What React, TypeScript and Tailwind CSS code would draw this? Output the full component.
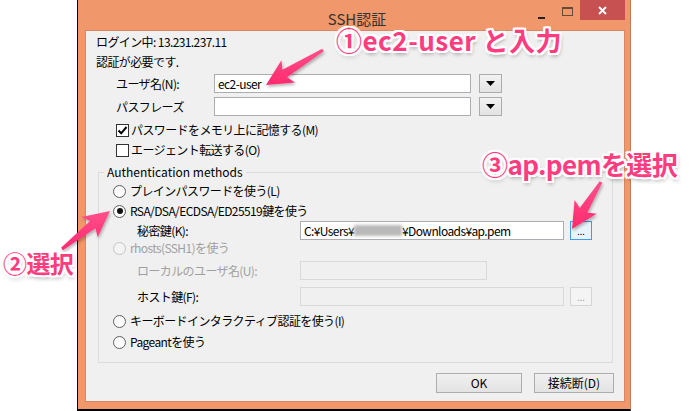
import React from "react";

type Pt = [number, number];

// skitch style arrow: thin tail, wide barbed head
function arrowPoints(tail: Pt, tip: Pt) {
  const tailW = 3;
  const neckW = 9;
  const headW = 26;
  const headL = 22;
  const [x1, y1] = tail;
  const [x2, y2] = tip;
  const len = Math.hypot(x2 - x1, y2 - y1);
  const dx = (x2 - x1) / len;
  const dy = (y2 - y1) / len;
  const nx = -dy;
  const ny = dx;
  const bx = x2 - dx * headL;
  const by = y2 - dy * headL;
  const pts: Pt[] = [
    [x1 + (nx * tailW) / 2, y1 + (ny * tailW) / 2],
    [bx + (nx * neckW) / 2, by + (ny * neckW) / 2],
    [bx - dx * 4 + (nx * headW) / 2, by - dy * 4 + (ny * headW) / 2],
    [x2, y2],
    [bx - dx * 4 - (nx * headW) / 2, by - dy * 4 - (ny * headW) / 2],
    [bx - (nx * neckW) / 2, by - (ny * neckW) / 2],
    [x1 - (nx * tailW) / 2, y1 - (ny * tailW) / 2],
  ];
  return pts.map((p) => `${p[0].toFixed(1)},${p[1].toFixed(1)}`).join(" ");
}

const ui =
  "font-['Noto_Sans_CJK_JP','Noto_Sans',sans-serif] text-[12px] tracking-[-0.6px] text-black";

const note =
  "absolute font-['Noto_Sans_CJK_JP',sans-serif] font-bold leading-none text-[#ff3c7e] [text-shadow:-2px_-2px_0_#fff,2px_-2px_0_#fff,-2px_2px_0_#fff,2px_2px_0_#fff,0_-2px_0_#fff,0_2px_0_#fff,-2px_0_0_#fff,2px_0_0_#fff,1px_3px_4px_rgba(0,0,0,0.4)]";

function Checkbox({ checked }: { checked?: boolean }) {
  return (
    <span className="w-[13px] h-[13px] border border-[#333] bg-white flex items-center justify-center shrink-0">
      {checked && (
        <svg width="11" height="11" viewBox="0 0 11 11">
          <path d="M1.5 5.5 L4.2 8.3 L9.5 2" stroke="#000" strokeWidth="2" fill="none" />
        </svg>
      )}
    </span>
  );
}

function Radio({ checked, disabled }: { checked?: boolean; disabled?: boolean }) {
  return (
    <span
      className={
        "w-[13px] h-[13px] rounded-full border flex items-center justify-center shrink-0 " +
        (disabled ? "border-[#c4c4c4] bg-[#f4f4f4]" : "border-[#5f5f5f] bg-gradient-to-b from-[#f6f6f6] to-white")
      }
    >
      {checked && <span className="w-[6px] h-[6px] rounded-full bg-[#111]" />}
    </span>
  );
}

function DropButton() {
  return (
    <div className="ml-[8px] w-[23px] h-[19px] border border-[#acacac] bg-gradient-to-b from-[#f2f2f2] to-[#e3e3e3] flex items-center justify-center">
      <svg width="9" height="5" viewBox="0 0 9 5">
        <path d="M0 0 H9 L4.5 5 Z" fill="#000" />
      </svg>
    </div>
  );
}

function DotsButton({ focused }: { focused?: boolean }) {
  return (
    <div
      className={
        "ml-[6px] w-[22px] h-[19px] border flex items-end justify-center pb-[3px] text-[9px] leading-none tracking-normal " +
        (focused ? "border-[#3c9cf0] bg-[#eaf3fb] text-black" : "border-[#d5d5d5] bg-[#f4f4f4] text-[#a0a0a0]")
      }
    >
      ...
    </div>
  );
}

export default function App() {
  return (
    <div className={"relative w-[692px] h-[411px] bg-white overflow-hidden " + ui}>
      {/* window */}
      <div className="ml-[77px] w-[554px] h-[411px] flex flex-col bg-[#f0976b] border-l border-l-black border-r border-r-[#c7774f] border-b-2 border-b-black">
        <div className="relative h-[31px] flex justify-center items-start pt-[11px] pl-[6px] text-[15px] leading-[15px] tracking-normal text-[#333]">
          SSH認証
          <div className="absolute top-0 right-[5px] flex items-start">
            <div className="w-[26px] h-[20px] flex justify-center">
              <span className="mt-[17px] w-[7px] h-[2px] bg-[#222]" />
            </div>
            <div className="w-[26px] h-[20px] flex justify-center">
              <span className="mt-[7px] w-[11px] h-[9px] border border-t-2 border-[#6b4a35]" />
            </div>
            <div className="w-[45px] h-[20px] bg-[#c75050] flex items-center justify-center">
              <svg width="9" height="9" viewBox="0 0 9 9">
                <path d="M1 1 L8 8 M8 1 L1 8" stroke="#fff" strokeWidth="1.8" />
              </svg>
            </div>
          </div>
        </div>

        {/* client area */}
        <div className="ml-[8px] w-[538px] h-[370px] bg-[#f0f0f0] shadow-[0_0_0_1px_#d9875f] flex flex-col pl-[10px] pt-[1px]">
          <div className="h-[20px] flex items-center">ログイン中: 13.231.237.11</div>
          <div className="h-[20px] flex items-center">認証が必要です.</div>

          <div className="mt-[2px] h-[19px] flex items-center pl-[20px]">
            <span className="w-[98px]">ユーザ名(N):</span>
            <div className="w-[257px] h-[19px] border border-[#abadb3] bg-white flex items-center px-[3px]">ec2-user</div>
            <DropButton />
          </div>
          <div className="mt-[4px] h-[19px] flex items-center pl-[20px]">
            <span className="w-[98px]">パスフレーズ</span>
            <div className="w-[257px] h-[19px] border border-[#abadb3] bg-white" />
            <DropButton />
          </div>

          <div className="mt-[4px] h-[20px] flex items-center gap-[2px] pl-[20px]">
            <Checkbox checked />
            <span>パスワードをメモリ上に記憶する(M)</span>
          </div>
          <div className="h-[20px] flex items-center gap-[2px] pl-[20px]">
            <Checkbox />
            <span>エージェント転送する(O)</span>
          </div>

          {/* group box */}
          <div className="mt-[12px] ml-[2px] w-[515px] h-[191px] border border-[#dcdcdc] flex flex-col">
            <div className="-mt-[9px] ml-[5px] px-[3px] w-fit h-[16px] leading-[16px] bg-[#f0f0f0] tracking-normal">
              Authentication methods
            </div>
            <div className="mt-[1px] h-[20px] flex items-center gap-[4px] pl-[14px]">
              <Radio />
              <span>プレインパスワードを使う(L)</span>
            </div>
            <div className="h-[20px] flex items-center gap-[4px] pl-[14px]">
              <Radio checked />
              <span>RSA/DSA/ECDSA/ED25519鍵を使う</span>
            </div>
            <div className="h-[19px] flex items-center pl-[38px]">
              <span className="w-[163px]">秘密鍵(K):</span>
              <div className="w-[264px] h-[19px] border border-[#abadb3] bg-white flex items-center px-[3px]">
                C:¥Users¥
                <span className="inline-block w-[48px] h-[11px] bg-[#b9b9b9] blur-[1.5px]" />
                ¥Downloads¥ap.pem
              </div>
              <DotsButton focused />
            </div>
            <div className="h-[16px] flex items-center gap-[4px] pl-[14px] text-[#a0a0a0]">
              <Radio disabled />
              <span>rhosts(SSH1)を使う</span>
            </div>
            <div className="mt-[5px] h-[19px] flex items-center pl-[38px]">
              <span className="w-[163px] text-[#a0a0a0]">ローカルのユーザ名(U):</span>
              <div className="w-[187px] h-[19px] border border-[#d9d9d9] bg-[#f0f0f0]" />
            </div>
            <div className="mt-[7px] h-[19px] flex items-center pl-[38px]">
              <span className="w-[163px]">ホスト鍵(F):</span>
              <div className="w-[264px] h-[19px] border border-[#d9d9d9] bg-[#f0f0f0]" />
              <DotsButton />
            </div>
            <div className="mt-[5px] h-[20px] flex items-center gap-[4px] pl-[14px]">
              <Radio />
              <span>キーボードインタラクティブ認証を使う(I)</span>
            </div>
            <div className="mt-[1px] h-[20px] flex items-center gap-[4px] pl-[14px]">
              <Radio />
              <span>Pageantを使う</span>
            </div>
          </div>

          <div className="mt-[10px] flex justify-end gap-[12px] pr-[10px] tracking-normal">
            <div className="w-[86px] h-[20px] border border-[#adadad] bg-gradient-to-b from-[#f0f0f0] to-[#e3e3e3] flex items-center justify-center">
              OK
            </div>
            <div className="w-[80px] h-[20px] border border-[#adadad] bg-gradient-to-b from-[#f0f0f0] to-[#e3e3e3] flex items-center justify-center">
              接続断(D)
            </div>
          </div>
        </div>
      </div>

      {/* annotations */}
      <svg className="absolute inset-0 pointer-events-none" width="692" height="411">
        <defs>
          <linearGradient id="pk" x1="0" y1="0" x2="0" y2="1">
            <stop offset="0" stopColor="#ff4f8c" />
            <stop offset="1" stopColor="#ff2a6f" />
          </linearGradient>
          <filter id="sh" x="-20%" y="-20%" width="140%" height="140%">
            <feDropShadow dx="1" dy="2" stdDeviation="1.5" floodColor="#000" floodOpacity="0.3" />
          </filter>
        </defs>
        <polygon points={arrowPoints([323, 50], [266, 85])} fill="url(#pk)" filter="url(#sh)" />
        <polygon points={arrowPoints([62, 249], [110, 211])} fill="url(#pk)" filter="url(#sh)" />
        <polygon points={arrowPoints([601, 182], [572, 229])} fill="url(#pk)" filter="url(#sh)" />
      </svg>
      <span className={note + " left-[336px] top-[27px] text-[26px] tracking-[0.5px]"}>①ec2-user と入力</span>
      <span className={note + " left-[3px] top-[251px] text-[24px]"}>②選択</span>
      <span className={note + " left-[482px] top-[151px] text-[26px]"}>③ap.pemを選択</span>
    </div>
  );
}
